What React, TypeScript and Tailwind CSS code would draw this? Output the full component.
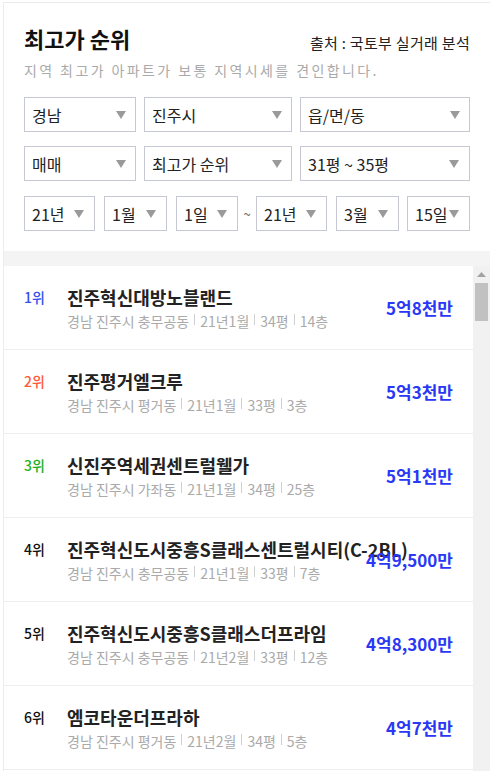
import React from 'react';

const FONT = "font-['Noto_Sans_CJK_KR','Noto_Sans',sans-serif]";

interface Item {
  rank: number;
  name: string;
  addr: string;
  date: string;
  size: string;
  floor: string;
  price: string;
}

const items: Item[] = [
  { rank: 1, name: '진주혁신대방노블랜드', addr: '경남 진주시 충무공동', date: '21년1월', size: '34평', floor: '14층', price: '5억8천만' },
  { rank: 2, name: '진주평거엘크루', addr: '경남 진주시 평거동', date: '21년1월', size: '33평', floor: '3층', price: '5억3천만' },
  { rank: 3, name: '신진주역세권센트럴웰가', addr: '경남 진주시 가좌동', date: '21년1월', size: '34평', floor: '25층', price: '5억1천만' },
  { rank: 4, name: '진주혁신도시중흥S클래스센트럴시티(C-2BL)', addr: '경남 진주시 충무공동', date: '21년1월', size: '33평', floor: '7층', price: '4억9,500만' },
  { rank: 5, name: '진주혁신도시중흥S클래스더프라임', addr: '경남 진주시 충무공동', date: '21년2월', size: '33평', floor: '12층', price: '4억8,300만' },
  { rank: 6, name: '엠코타운더프라하', addr: '경남 진주시 평거동', date: '21년2월', size: '34평', floor: '5층', price: '4억7천만' },
];

const rankColor = (rank: number) => {
  if (rank === 1) return 'text-[#3450ee]';
  if (rank === 2) return 'text-[#ff5a38]';
  if (rank === 3) return 'text-[#1eb01e]';
  return 'text-[#111]';
};

const Arrow = () => (
  <svg width="10" height="8" viewBox="0 0 10 8" className="shrink-0">
    <polygon points="0,0 10,0 5,8" fill="#9a9a9a" />
  </svg>
);

const Select: React.FC<{ label: string; className?: string; arrowGap?: string }> = ({ label, className = '', arrowGap = 'pr-[9px]' }) => (
  <div className={`h-[35px] border border-[#c6c9d4] bg-white flex items-center justify-between pl-[7px] ${arrowGap} ${className}`}>
    <span className="text-[16px] leading-none text-[#222] whitespace-nowrap">{label}</span>
    <Arrow />
  </div>
);

const Sep = () => <span className="inline-block w-px h-[11px] bg-[#cfcfcf] mx-[5px] -translate-y-[2px]" />;

const Row: React.FC<{ item: Item }> = ({ item }) => (
  <div className="relative h-[84px] border-b border-[#eee] flex items-start pt-[19px] pl-[20px]">
    <div className={`w-[43px] shrink-0 leading-[24px] text-[14px] font-medium ${rankColor(item.rank)}`}>{item.rank}위</div>
    <div className="flex flex-col min-w-0">
      <div className="text-[18px] leading-[24px] font-bold text-[#222] whitespace-nowrap">{item.name}</div>
      <div className="mt-[2px] text-[14px] leading-[20px] text-[#aaa] whitespace-nowrap flex items-center">
        <span>{item.addr}</span>
        <Sep />
        <span>{item.date}</span>
        <Sep />
        <span>{item.size}</span>
        <Sep />
        <span>{item.floor}</span>
      </div>
    </div>
    {/* price overlays long names, as in the original */}
    <div className="absolute right-[20px] top-0 bottom-0 flex items-center text-[17px] font-bold text-[#2a38f5]">
      {item.price}
    </div>
  </div>
);

export default function App() {
  return (
    <div className={`w-[490px] h-[771px] bg-white overflow-hidden ${FONT}`}>
      <div className="mt-[2px] ml-[3px] h-[769px] border-t border-l border-[#ececec] flex flex-col">
        {/* header */}
        <div className="px-[20px] pt-[21px] pb-[20px] bg-white">
          <div className="flex items-end justify-between">
            <h1 className="text-[22px] leading-[28px] font-bold text-[#111]">최고가 순위</h1>
            <span className="text-[15px] leading-[20px] tracking-[0.3px] text-[#222] -mb-[1px]">출처 : 국토부 실거래 분석</span>
          </div>
          <p className="mt-[8px] text-[14px] leading-[20px] tracking-[2.4px] text-[#aaa]">
            지역 최고가 아파트가 보통 지역시세를 견인합니다.
          </p>

          <div className="mt-[17px] grid grid-cols-[112px_148px_1fr] gap-[8px]">
            <Select label="경남" />
            <Select label="진주시" />
            <Select label="읍/면/동" />
          </div>
          <div className="mt-[14px] grid grid-cols-[112px_148px_1fr] gap-[8px]">
            <Select label="매매" />
            <Select label="최고가 순위" />
            <Select label="31평 ~ 35평" arrowGap="pr-[10px]" />
          </div>
          <div className="mt-[15px] flex items-center">
            <Select label="21년" className="w-[71px]" arrowGap="pr-[10px]" />
            <Select label="1월" className="w-[63px] ml-[9px]" arrowGap="pr-[10px]" />
            <Select label="1일" className="w-[62px] ml-[9px]" arrowGap="pr-[10px]" />
            <span className="w-[18px] text-center text-[13px] text-[#666]">~</span>
            <Select label="21년" className="w-[71px]" arrowGap="pr-[10px]" />
            <Select label="3월" className="w-[63px] ml-[9px]" arrowGap="pr-[10px]" />
            <Select label="15일" className="w-[63px] ml-[8px]" arrowGap="pr-[10px]" />
          </div>
        </div>

        <div className="h-[15px] bg-[#f4f4f4] shrink-0" />

        {/* list */}
        <div className="flex flex-1 min-h-0">
          <div className="flex-1 flex flex-col bg-white">
            {items.map(item => (
              <Row key={item.rank} item={item} />
            ))}
          </div>
          <div className="w-[17px] bg-[#f1f1f1] flex flex-col items-center">
            <svg width="9" height="5" viewBox="0 0 9 5" className="mt-[6px]">
              <polygon points="0,5 9,5 4.5,0" fill="#a3a3a3" />
            </svg>
            <div className="mt-[6px] w-[13px] h-[38px] bg-[#c1c1c1]" />
          </div>
        </div>
      </div>
    </div>
  );
}
